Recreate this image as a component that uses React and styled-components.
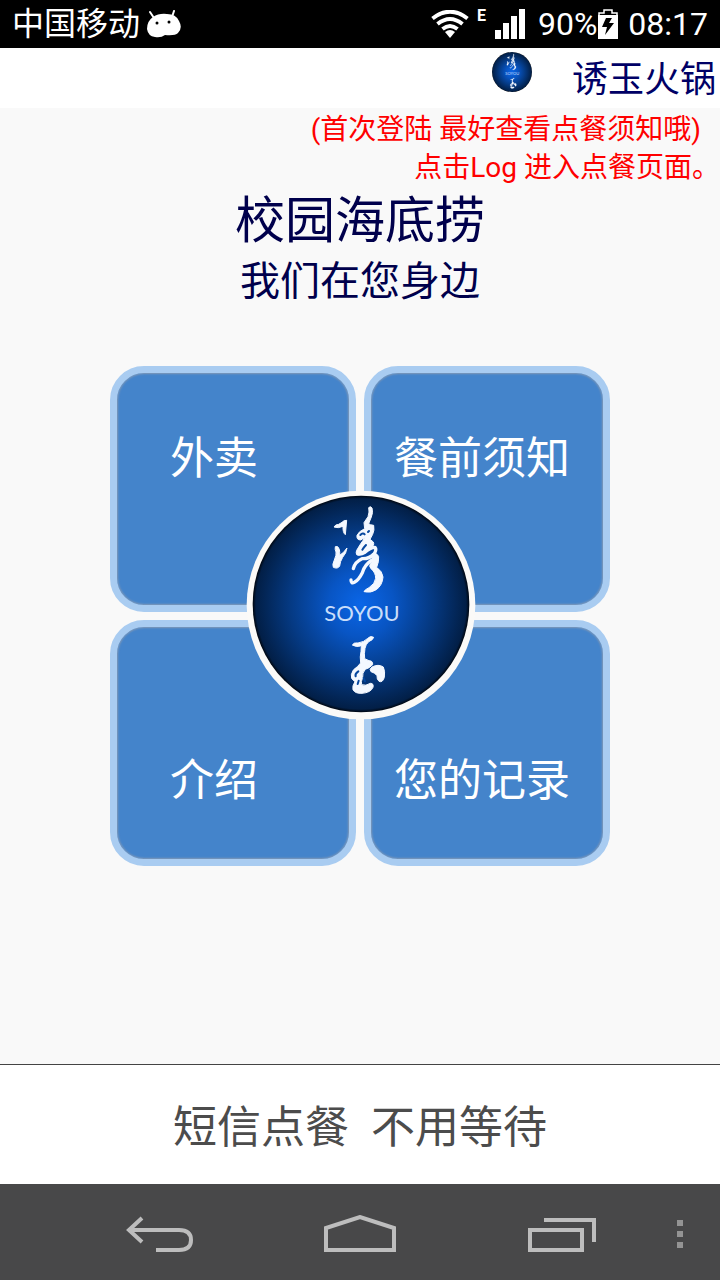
import React from 'react'
import styled, { createGlobalStyle } from 'styled-components'

const tiles = [
    { label: '外卖', inset: 53, align: 'flex-start' },
    { label: '餐前须知', inset: 23, align: 'flex-start' },
    { label: '介绍', inset: 53, align: 'flex-end' },
    { label: '您的记录', inset: 23, align: 'flex-end' },
]

const Logo = ({ id, ring }) => (
    <svg viewBox={ring ? '18 16 690 690' : '38 33 650 650'} width="100%" height="100%" role="img" aria-label="诱玉">
        <defs>
            <radialGradient id={id} cx="0.5" cy="0.5" r="0.5">
                <stop offset="0" stopColor="#0a66e8" />
                <stop offset="0.3" stopColor="#0855c4" />
                <stop offset="0.65" stopColor="#053a84" />
                <stop offset="0.97" stopColor="#021f47" />
                <stop offset="1" stopColor="#00060f" />
            </radialGradient>
        </defs>
        {ring && <circle cx="363" cy="361" r="343" fill="#fbfaf8" />}
        <circle cx="363" cy="358" r="325" fill={`url(#${id})`} />
        <g fill="#f4f8ff" stroke="#f4f8ff" strokeWidth="3" strokeLinejoin="round">
            <path d="M282 127Q286 119 296 119L306 113Q312 106 320 107L316 150Q308 144 309 125Q294 132 282 127Z" />
            <path d="M286 186Q294 182 298 194Q300 203 299 212Q310 206 321 190Q319 206 308 218Q300 231 299 244Q293 254 280 248Q276 240 283 226Q290 210 288 202Q284 194 286 186Z" />
            <path d="M386 69Q391 63 396 70Q400 84 394 97L386 117Q390 121 401 122Q404 137 398 149L390 164L400 172Q405 183 390 191L374 203L357 211Q345 211 350 197L361 179Q369 168 374 159L362 166Q349 166 351 152Q356 140 374 132L372 114L384 96Q389 82 386 69Z" />
            <path d="M397 207Q410 203 416 216Q417 231 410 248Q427 260 429 277Q427 302 409 315Q393 326 372 321Q374 315 387 309Q405 298 407 281Q407 264 394 253Q386 246 391 237Q400 226 398 216Z" />
            <path d="M430 547Q436 560 433 578Q428 595 417 590Q410 584 411 573Q405 564 393 561Q386 554 396 547Q415 537 430 547Z" />
            <path d="M337 481Q341 473 354 475Q373 472 382 462Q392 451 401 458Q399 466 386 471Q377 479 375 491Q372 508 374 522L387 528Q399 528 398 540Q389 550 376 554Q366 565 368 578Q362 592 365 600Q377 605 391 596Q402 596 399 608Q392 624 366 626Q345 627 339 615Q336 604 345 591Q331 583 334 570Q337 554 352 546L362 535Q359 516 363 500L364 483Q350 489 337 481Z" />
        </g>
        <g fill="none" stroke="#f4f8ff" strokeLinecap="round" strokeLinejoin="round">
            <path strokeWidth="10" d="M353 207Q362 211 373 204Q392 188 405 188Q411 195 402 208Q388 223 366 222Q344 232 340 252" />
            <path strokeWidth="10" d="M396 226Q374 240 367 264Q356 286 343 293Q333 298 333 286" />
        </g>
        <g fill="none" stroke="#06479f" strokeLinecap="round">
            <path strokeWidth="6" d="M361 151Q369 143 374 149M378 181Q370 190 367 195M384 142L387 139" />
            <path strokeWidth="6" d="M355 560Q344 567 347 575M353 598L356 588M371 580L375 590" />
        </g>
        <LogoText x="366" y="409" textAnchor="middle">SOYOU</LogoText>
    </svg>
)

const App = () => {
    return (
        <Page>
            <GlobalStyle />
            <StatusBar>
                <Carrier>中国移动</Carrier>
                <svg width="34" height="28" viewBox="0 0 34 28" aria-hidden="true">
                    <path d="M3 2L7 8M27 1L25 7" stroke="#fff" strokeWidth="2" strokeLinecap="round" />
                    <path fill="#fff" d="M6 7Q12 3 20 4Q29 4 32 11Q36 18 31 23Q28 26 18 25Q14 28 8 27Q1 26 0 19Q0 11 6 7Z" />
                    <circle cx="10" cy="13" r="1.5" fill="#000" />
                    <circle cx="22" cy="12" r="1.5" fill="#000" />
                </svg>
                <StatusRight>
                    <svg width="38" height="28" viewBox="0 0 38 28" aria-hidden="true">
                        <g fill="none" stroke="#fff" strokeWidth="4">
                            <path d="M1.5 8.5Q19-5 36.5 8.5" />
                            <path d="M6.5 14Q19 4 31.5 14" />
                            <path d="M11.5 19Q19 13 26.5 19" />
                        </g>
                        <path fill="#fff" d="M14 22Q19 18 24 22L19 28Z" />
                    </svg>
                    <Network>E</Network>
                    <svg width="30" height="30" viewBox="0 0 30 30" aria-hidden="true">
                        <path fill="#fff" d="M0 21h6v9H0zM8 14h6v16H8zM16 7h6v23h-6zM24 0h6v30h-6z" />
                    </svg>
                    <Battery>
                        90%
                        <svg width="20" height="30" viewBox="0 0 20 30" aria-hidden="true">
                            <path fill="none" stroke="#fff" strokeWidth="1.5" d="M1 7V4H6V1H14V4H19V7" />
                            <path fill="#fff" d="M0 6h20v24H0z" />
                            <path fill="#000" d="M8 9H14L11 14H16L7 26L9 18H4Z" />
                        </svg>
                    </Battery>
                    <Clock>08:17</Clock>
                </StatusRight>
            </StatusBar>
            <Header>
                <HeaderLogo><Logo id="smallLogo" /></HeaderLogo>
                <HeaderTitle>诱玉火锅</HeaderTitle>
            </Header>
            <Main>
                <Notice $end={19}>(首次登陆 最好查看点餐须知哦)</Notice>
                <Notice $end={0}>点击Log 进入点餐页面。</Notice>
                <Title>校园海底捞</Title>
                <Subtitle>我们在您身边</Subtitle>
                <Menu>
                    {tiles.map(({ label, inset, align }) => (
                        <Tile key={label} type="button" $inset={inset} $align={align}>{label}</Tile>
                    ))}
                    <Orb type="button" aria-label="诱玉"><Logo id="bigLogo" ring /></Orb>
                </Menu>
            </Main>
            <Footer>短信点餐  不用等待</Footer>
            <NavBar>
                <NavButton type="button" aria-label="返回">
                    <svg width="72" height="40" viewBox="0 0 72 40">
                        <path d="M18 3L5 15L18 27M5 15H55Q67 15 67 25Q67 35 55 35H32" />
                    </svg>
                </NavButton>
                <NavButton type="button" aria-label="主页">
                    <svg width="72" height="40" viewBox="0 0 72 40">
                        <path d="M2 35V13L36 2L70 13V35Z" />
                    </svg>
                </NavButton>
                <NavButton type="button" aria-label="最近任务">
                    <svg width="72" height="40" viewBox="0 0 72 40">
                        <path d="M6 15H58V35H6ZM20 5H70V27" />
                    </svg>
                </NavButton>
                <MoreButton type="button" aria-label="更多">
                    <svg width="8" height="30" viewBox="0 0 8 30">
                        <path fill="#949494" d="M1 1h6v6H1zM1 12h6v6H1zM1 23h6v6H1z" />
                    </svg>
                </MoreButton>
            </NavBar>
        </Page>
    )
}

export default App

const GlobalStyle = createGlobalStyle`
    * {
        box-sizing: border-box;
    }
    body {
        margin: 0;
        font-family: Roboto, "Noto Sans CJK SC", sans-serif;
        background-color: #f9f9f9;
    }
    svg {
        display: block;
        flex-shrink: 0;
    }
    button {
        font-family: inherit;
        padding: 0;
        border: 0;
        background: none;
        cursor: pointer;
    }
`
const Page = styled.div`
    display: flex;
    flex-direction: column;
    min-height: 100vh;
`
const StatusBar = styled.div`
    display: flex;
    align-items: center;
    gap: 7px;
    height: 48px;
    padding: 0 12px;
    background-color: #000;
    color: #fff;
`
const Carrier = styled.span`
    font-size: 32px;
    line-height: 48px;
`
const StatusRight = styled.div`
    display: flex;
    align-items: center;
    margin-left: auto;
`
const Network = styled.span`
    align-self: flex-start;
    width: 10px;
    margin: 0 8px;
    font-size: 16px;
    line-height: 32px;
    font-weight: 700;
`
const Battery = styled.span`
    display: flex;
    align-items: center;
    gap: 1px;
    margin: 0 10px 0 13px;
    font-size: 32px;
    line-height: 48px;
`
const Clock = styled.span`
    font-size: 32px;
    line-height: 48px;
`
const Header = styled.header`
    display: flex;
    justify-content: flex-end;
    gap: 40px;
    padding: 4px 4px 0;
    background-color: #fff;
`
const HeaderLogo = styled.div`
    width: 40px;
    height: 40px;
`
const HeaderTitle = styled.span`
    font-size: 36px;
    line-height: 56px;
    color: #000066;
`
const Main = styled.main`
    flex: 1;
    display: flex;
    flex-direction: column;
    align-items: center;
    padding-top: 3px;
    background-color: #f9f9f9;
`
const Notice = styled.p`
    align-self: flex-end;
    margin: 0;
    padding-right: ${({ $end }) => $end}px;
    font-size: 28px;
    line-height: 38px;
    color: #ff0000;
`
const Title = styled.h1`
    margin: 0;
    font-size: 50px;
    font-weight: 400;
    line-height: 68px;
    color: #00004c;
`
const Subtitle = styled.h2`
    margin: 0;
    font-size: 40px;
    font-weight: 400;
    line-height: 54px;
    color: #00004c;
`
const Menu = styled.div`
    position: relative;
    display: grid;
    grid-template-columns: 1fr 1fr;
    grid-auto-rows: 246px;
    gap: 8px;
    width: 100%;
    max-width: 500px;
    margin: 57px 0;
`
const Tile = styled.button`
    && {
        display: flex;
        align-items: ${({ $align }) => $align};
        padding: 54px 0 46px ${({ $inset }) => $inset}px;
        border: 7px solid #a9ccf1;
        border-radius: 34px;
        background-color: #4484cb;
        box-shadow: inset 0 0 2px 1px #8299b6;
        color: #fff;
        font-size: 44px;
        line-height: 64px;
        white-space: nowrap;
    }
`
// sits on top of the crossing between the four tiles
const Orb = styled.button`
    && {
        position: absolute;
        top: 124px;
        left: 50%;
        width: 230px;
        height: 230px;
        margin-left: -114px;
        border-radius: 50%;
    }
`
const LogoText = styled.text`
    font-family: Lato, sans-serif;
    font-size: 66px;
    font-weight: 400;
    fill: #c9defa;
`
const Footer = styled.footer`
    padding: 31px 0 24px;
    border-top: 1px solid #444;
    background-color: #fff;
    color: #4c4c4c;
    font-size: 44px;
    line-height: 64px;
    text-align: center;
    white-space: pre;
`
const NavBar = styled.nav`
    display: flex;
    height: 96px;
    padding: 0 20px 0 60px;
    background-color: #484849;
`
const NavButton = styled.button`
    && {
        display: flex;
        flex: 1;
        align-items: center;
        justify-content: center;
        padding-top: 6px;
        fill: none;
        stroke: #bdbdbd;
        stroke-width: 4px;
    }
`
const MoreButton = styled.button`
    && {
        display: flex;
        align-items: center;
        justify-content: center;
        width: 40px;
        padding-top: 4px;
    }
`
